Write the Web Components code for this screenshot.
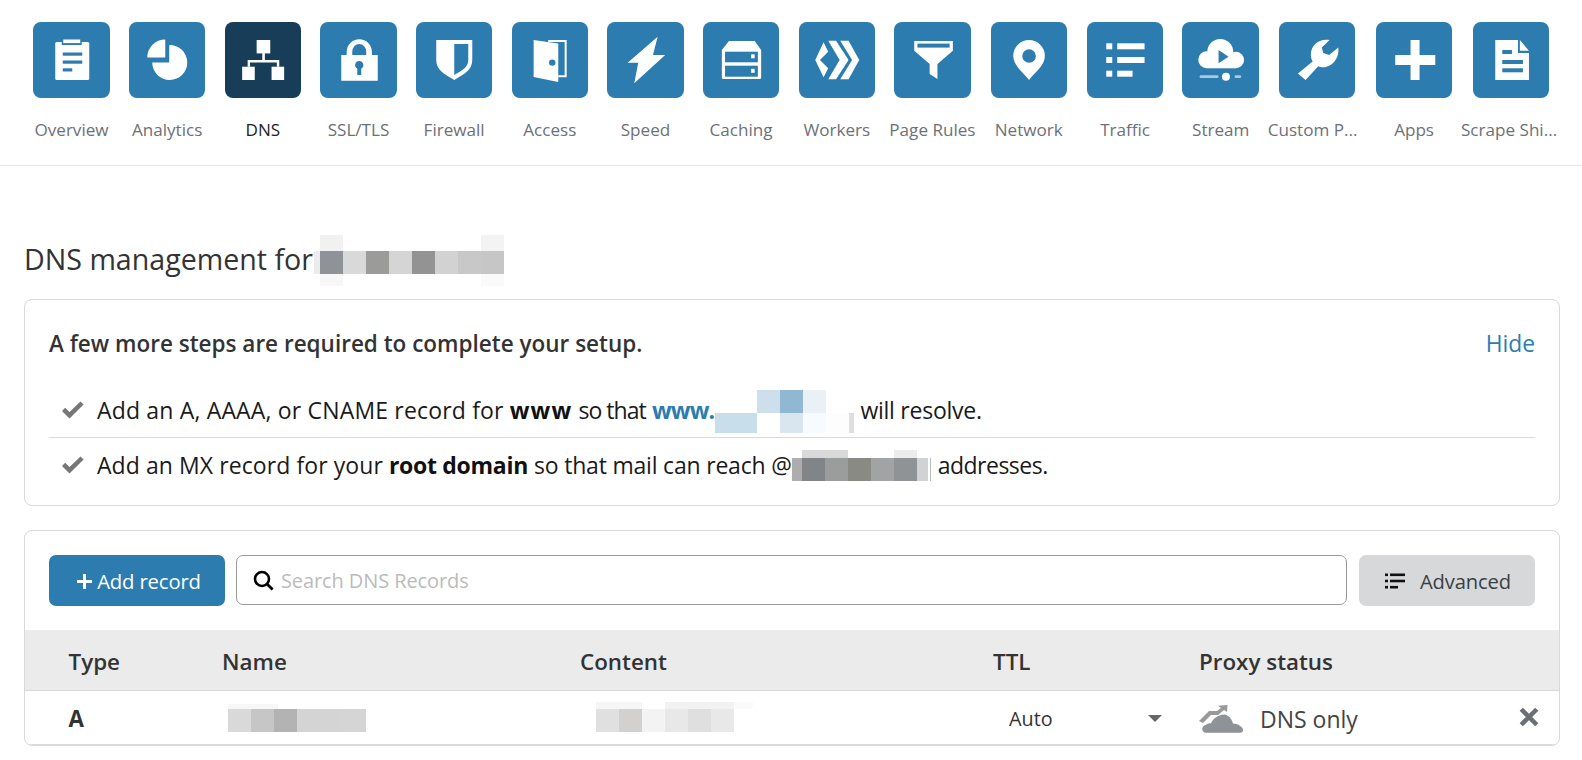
<!DOCTYPE html>
<html lang="en"><head><meta charset="utf-8"><title>DNS</title>
<style>
html,body{margin:0;background:#fff}
body{font-family:"Open Sans","Noto Sans",sans-serif;color:#333;overflow:hidden;height:760px}
svg.g{display:block;width:100%;height:100%}
.b{fill:#2c7cb0}.d{fill:#173d58}
</style></head><body>
<dash-app>
 <app-nav>
  <nav-tab label="Overview"><svg class="g" viewBox="0 0 76 76" fill="#fff"><rect x="22" y="20" width="34" height="38" rx="1.5"/><rect x="28.5" y="17" width="20" height="6" class="b"/><rect x="30" y="17.5" width="17" height="3.6"/><rect x="29.5" y="30.5" width="19.5" height="3.2" class="b"/><rect x="29.5" y="38.5" width="19.5" height="3.2" class="b"/><rect x="29.5" y="46.3" width="9.5" height="3.2" class="b"/></svg></nav-tab>
  <nav-tab label="Analytics"><svg class="g" viewBox="0 0 76 76" fill="#fff"><path d="M36 35.5V17.5A18 18 0 0 0 18 35.5Z"/><path d="M40 23A17.5 17.5 0 1 1 23 40.5H40Z"/></svg></nav-tab>
  <nav-tab label="DNS" active><svg class="g" viewBox="0 0 76 76" fill="#fff"><rect x="31.4" y="18" width="13.6" height="13.4"/><rect x="37" y="31" width="2.6" height="8"/><path d="M22.4 44.7V38H54V44.7H51.6V40.4H24.8V44.7Z"/><rect x="16.9" y="44.7" width="12.6" height="13.3"/><rect x="46.3" y="44.7" width="12.6" height="13.3"/></svg></nav-tab>
  <nav-tab label="SSL/TLS"><svg class="g" viewBox="0 0 76 76" fill="#fff"><path fill-rule="evenodd" d="M21 33H26.4V30A12.6 12.7 0 0 1 51.7 30V33H57.5V58.7H21ZM32 33H46V30A7 8 0 0 0 32 30ZM39 39A4 4 0 0 0 37 46.5V53H41V46.5A4 4 0 0 0 39 39Z"/></svg></nav-tab>
  <nav-tab label="Firewall"><svg class="g" viewBox="0 0 76 76" fill="#fff"><path d="M20 18H56V38C56 48 48 52 38 58C28 52 20 48 20 38Z"/><path d="M38 22H52V38C52 45 46 48.5 38 53Z" class="b"/></svg></nav-tab>
  <nav-tab label="Access"><svg class="g" viewBox="0 0 76 76" fill="#fff"><path d="M21.4 18L46 21.5V60L21.4 55Z"/><path d="M36 19H53.4V54.2H46" fill="none" stroke="#fff" stroke-width="2"/><circle cx="40" cy="40.6" r="3.2" class="b"/></svg></nav-tab>
  <nav-tab label="Speed"><svg class="g" viewBox="0 0 76 76" fill="#fff"><path d="M50.4 14.7L20.4 40.7H31L27 61.3L57.9 33H45.7Z"/></svg></nav-tab>
  <nav-tab label="Caching"><svg class="g" viewBox="0 0 76 76" fill="#fff"><path d="M25.7 19H51.4L57.9 28V55.5Q57.9 57 56.4 57H20.1Q18.6 57 18.6 55.5V28Z"/><rect x="21.8" y="29.7" width="32.8" height="10.6" class="b"/><rect x="21.8" y="43.7" width="32.8" height="11" class="b"/><rect x="47.9" y="32.3" width="3.5" height="4"/><rect x="47.9" y="46.8" width="3.5" height="4"/></svg></nav-tab>
  <nav-tab label="Workers"><svg class="g" viewBox="0 0 76 76" fill="#fff"><path d="M24.3 20.3L29 29.7L20.7 38L29 46.3L24.3 55.3L16 38Z"/><path d="M29 18.7H36.8L49.3 38L36.8 57.3H29L40.4 38Z"/><path d="M41 18.7H49.3L60 38L49.3 57.3H41L52.9 38Z"/></svg></nav-tab>
  <nav-tab label="Page Rules"><svg class="g" viewBox="0 0 76 76" fill="#fff"><path d="M20 19H58.6V28.7L43.2 42V57L35.4 52V42L20 28.7Z"/><rect x="23.2" y="21.6" width="32.2" height="4" class="b"/></svg></nav-tab>
  <nav-tab label="Network" wide><svg class="g" viewBox="0 0 76 76" fill="#fff"><path fill-rule="evenodd" d="M37.8 58C32 50 22 44 22 33.8A15.8 15.8 0 0 1 53.6 33.8C53.6 44 43.6 50 37.8 58ZM37.8 27.2A6.8 6.8 0 1 0 37.8 40.8A6.8 6.8 0 1 0 37.8 27.2Z"/></svg></nav-tab>
  <nav-tab label="Traffic"><svg class="g" viewBox="0 0 76 76" fill="#fff"><rect x="19" y="21.3" width="6" height="6"/><rect x="19" y="35" width="6" height="6"/><rect x="19" y="48.7" width="6" height="6"/><rect x="30" y="21.3" width="27.3" height="6"/><rect x="30" y="35" width="27.3" height="6"/><rect x="30" y="48.7" width="15.3" height="6"/></svg></nav-tab>
  <nav-tab label="Stream"><svg class="g" viewBox="0 0 76 76" fill="#fff"><circle cx="38" cy="30" r="13"/><circle cx="24.5" cy="37.8" r="8.5"/><circle cx="53.5" cy="38" r="8.3"/><rect x="24.5" y="34" width="29" height="12.3"/><path d="M36.3 28V41.3L46.3 34.7Z" class="b"/><rect x="17.3" y="53.3" width="19" height="2.8" rx="1.4" opacity=".6"/><circle cx="43.7" cy="54.7" r="4"/><rect x="52.3" y="53.3" width="6.7" height="2.8" rx="1.4" opacity=".6"/></svg></nav-tab>
  <nav-tab label="Custom P..." wide nudge="9"><svg class="g" viewBox="0 0 76 76" fill="#fff"><path d="M50.3 18L42.5 25.5L44 31L50 33L59 25.5C60.5 36 53 45 44 45.3C42 45.3 40.5 45 39 44.3L26.3 58L18.7 51.5L33.4 39.5C32.2 37.5 31.6 35 31.6 32.5C31.6 23 40 16 50.3 18Z"/></svg></nav-tab>
  <nav-tab label="Apps" wide><svg class="g" viewBox="0 0 76 76" fill="#fff"><rect x="34.3" y="18" width="9" height="40"/><rect x="19" y="33" width="40" height="10"/></svg></nav-tab>
  <nav-tab label="Scrape Shi..." wide nudge="4"><svg class="g" viewBox="0 0 76 76" fill="#fff"><path d="M22 18H44.7V31H55.7V58H22Z"/><path d="M46.6 18L55.7 28.8H46.6Z"/><rect x="29" y="28" width="9.7" height="4" class="b"/><rect x="29" y="38" width="20.7" height="4" class="b"/><rect x="29" y="46.3" width="20.7" height="4" class="b"/></svg></nav-tab>
 </app-nav>
 <dns-title>DNS management for<blur-mask w="190" gap="1" top="-35" rows="16|6:-,23:#f1f1f1,138:-,23:#f3f3f3;23|6:#ececec,23:#8f9296,23:#d9d9d9,23:#9b9b99,23:#d5d5d5,23:#939393,23:#d2d2d2,23:#c8c8c8,23:#c6c6c6;12|6:-,23:#f7f7f7,138:-,23:#fafafa"></blur-mask></dns-title>
 <setup-card>
  <step-row><span style="letter-spacing:.17px">Add an A, AAAA, or CNAME record for</span> <b style="letter-spacing:1.2px">www</b> <span style="letter-spacing:-.95px">so that</span> <a style="letter-spacing:-.8px">www.</a><blur-mask w="139" top="-29" gap="1" rows="23|42:-,23:#cddfea,23:#90b8d2,23:#eaf1f6;20|42:#c8deea,23:-,23:#d9e5ef,23:#f8fbfd,23:#fdfdfd,5:#dedede"></blur-mask> <span style="letter-spacing:-.25px">will resolve.</span></step-row>
  <step-row last>Add an MX record for your <b style="letter-spacing:-.3px">root domain</b> <span style="letter-spacing:-.2px">so that mail can reach @</span><blur-mask w="140" top="-24" rows="8|10:-,46:#d9d9d9,46:-,23:#ececec;23|10:#adadad,23:#828588,23:#9b9c9c,23:#8a8a85,23:#a2a3a5,23:#909396,11:#d0d2d4,2:-,1.5:#bbb"></blur-mask> <span style="letter-spacing:-.5px">addresses.</span></step-row>
 </setup-card>
 <records-card>
  <record-row type="head"></record-row>
  <record-row></record-row>
 </records-card>
</dash-app>
<script>
const def=(n,html,init)=>customElements.define(n,class extends HTMLElement{
  connectedCallback(){ if(this.shadowRoot)return; const s=this.attachShadow({mode:'open'}); s.innerHTML=typeof html==='function'?html(this):html; init&&init(this,s);} });

def('dash-app',`<style>:host{display:block;width:1582px}</style><slot></slot>`);
def('app-nav',`<style>:host{display:flex;height:165px;padding-left:23.7px;border-bottom:1px solid #e6e6e6;box-sizing:content-box}</style><slot></slot>`);
def('nav-tab',t=>`<style>
:host{display:flex;flex-direction:column;align-items:center;width:${t.hasAttribute('wide')?97:95.67}px;flex:none;padding-top:22px;box-sizing:border-box}
.ic{width:76.5px;height:76px;border-radius:8px;background:${t.hasAttribute('active')?'#173d58':'#2c7cb0'};flex:none}
.l{margin-top:20px;font-size:17.1px;line-height:24px;margin-right:${t.getAttribute('nudge')||0}px;color:${t.hasAttribute('active')?'#222':'#6d7177'};white-space:nowrap}
</style><div class="ic"><slot></slot></div><div class="l">${t.getAttribute('label')}</div>`,(t)=>{ if(t.hasAttribute('active')) t.querySelectorAll('.b').forEach(e=>e.setAttribute('class','d')); });
def('blur-mask',t=>{
 const rows=t.getAttribute('rows').split(';').map(r=>{const[h,c]=r.split('|');
  return `<div class="r" style="height:${h}px">`+c.split(',').map(x=>{const[w,col]=x.split(':');return `<i style="width:${w}px;background:${col==='-'?'transparent':col}"></i>`}).join('')+`</div>`}).join('');
 return `<style>:host{display:inline-block;position:relative;width:${t.getAttribute('w')}px;height:0;margin-left:${t.getAttribute('gap')||0}px}
 .m{position:absolute;left:0;top:${t.getAttribute('top')}px}.r{display:flex}.r i{display:block;flex:none}</style><div class="m">${rows}</div>`});
def('dns-title',`<style>:host{display:flex;align-items:center;height:58px;margin:63px 0 12px 24px;font-size:28.6px;color:#333}
span{white-space:nowrap}</style><span><slot></slot></span>`);
def('setup-card',`<style>
:host{display:block;margin:0 22px 0 24px;height:206.5px;box-sizing:border-box;border:1px solid #d9d9d9;border-radius:8px;padding:23px 24px 0}
.h{display:flex;justify-content:space-between;align-items:center;height:40px;margin-bottom:19px;font-size:22.5px;font-weight:600;color:#333}
.h a{font-weight:400;color:#2c7cb0;font-size:22.8px}
</style><div class="h"><span>A few more steps are required to complete your setup.</span><a>Hide</a></div><slot></slot>`);
def('step-row',t=>`<style>
:host{display:flex;align-items:center;height:${t.hasAttribute('last')?54:56}px;box-sizing:border-box;${t.hasAttribute('last')?'':'border-bottom:1px solid #d9d9d9;'}padding-left:12px;font-size:23px;color:#1a1a1a;letter-spacing:.08px}
svg{width:23px;height:18px;flex:none;margin-right:13px}
span{white-space:nowrap}
::slotted(b){font-weight:700;color:#111}
::slotted(a){font-weight:700;color:#2c7cb0}
</style><svg viewBox="0 0 23 18"><path d="M1 10L4.2 6.8L8.5 11L19.5 0.5L22.6 3.6L8.5 17.5Z" fill="#777"/></svg><span><slot></slot></span>`);
def('records-card',`<style>
:host{display:block;margin:24.5px 22px 0 24px;height:215.5px;box-sizing:border-box;border:1px solid #d9d9d9;border-radius:8px;overflow:hidden}
.bar{display:flex;align-items:center;gap:11px;padding:24px 24px 0;height:51px;margin-bottom:24px}
button{font:inherit;border:0;height:51px;border-radius:7px;display:flex;align-items:center;white-space:nowrap;padding:1px 0 0}
.add{background:#2c7cb0;color:#fff;width:176px;box-sizing:border-box;padding-left:4px;justify-content:center;font-size:20.3px;letter-spacing:-.15px;gap:5px}
.add svg{width:15px;height:15px}
.s{flex:1;height:50px;box-sizing:border-box;margin-bottom:1px;border:1px solid #999;border-radius:7px;display:flex;align-items:center;padding:1px 0 0 16px;gap:7px;font-size:20px;color:#bbb;letter-spacing:-.1px}
.s svg{width:21px;height:21px;flex:none}
.adv{background:#d6d8da;color:#3a3f44;width:176px;margin-left:1px;font-size:20.2px;letter-spacing:-.15px;gap:15px;padding-left:26px;box-sizing:border-box}
.adv svg{width:20px;height:16px;flex:none}
</style><div class="bar"><button class="add"><svg viewBox="0 0 15 15"><path d="M6 0h3v6h6v3H9v6H6V9H0V6h6z" fill="#fff"/></svg>Add record</button>
<div class="s"><svg viewBox="0 0 21 21"><circle cx="9" cy="9" r="7" fill="none" stroke="#000" stroke-width="2.6"/><path d="M14 14l5.6 5.6" stroke="#000" stroke-width="2.8"/></svg>Search DNS Records</div>
<button class="adv"><svg viewBox="0 0 20 16"><g fill="#111"><rect y="0.5" width="3" height="2.6"/><rect y="6.7" width="3" height="2.6"/><rect y="12.9" width="3" height="2.6"/><rect x="5" y="0.5" width="15" height="2.6"/><rect x="5" y="6.7" width="15" height="2.6"/><rect x="5" y="12.9" width="8" height="2.6"/></g></svg>Advanced</button></div><slot></slot>`);
def('record-row',t=>{
 const head=t.getAttribute('type')==='head';
 const css=`<style>
 :host{display:grid;grid-template-columns:153.5px 358px 413px 206px 1fr;padding:${head?3:2}px 0 0 43.5px;align-items:center;box-sizing:border-box;height:${head?61:54}px;border-bottom:1px solid #d9d9d9;${head?'background:#ebebeb;':''}font-size:20px;color:#333}
 .b{font-weight:600;font-size:22.4px;color:#333}
 .sel{display:flex;align-items:center;padding-left:16px;padding-right:37px;justify-content:space-between;font-size:19.8px}
 .sel i{border:7px solid transparent;border-top:7px solid #666;border-bottom:0}
 .px{display:flex;align-items:center;padding-right:20px;font-size:23px;color:#444}
 .px svg.c{width:44px;height:28px;margin-right:17px;flex:none}
 .px svg.x{width:20px;height:20px;margin-left:auto;flex:none;margin-top:-4px}
 </style>`;
 if(head) return css+`<div class="b">Type</div><div class="b">Name</div><div class="b">Content</div><div class="b">TTL</div><div class="b">Proxy status</div>`;
 return css+`<div class="b" style="font-weight:700">A</div>
 <div style="height:24px;padding-left:6px"><blur-mask w="138" top="-3" rows="5|50:#f7f7f7;23|23:#d9d9d9,23:#c6c6c6,23:#b3b3b3,23:#d4d4d4,23:#d4d4d4,23:#d5d5d5" style="vertical-align:top"></blur-mask></div>
 <div style="height:24px;padding-left:16px"><blur-mask w="157" top="-5" rows="7|46:#f6f6f6,23:-,69:#f2f2f2,19:#fafafa;23|23:#e0e0e0,23:#d2d1cf,23:#f3f3f3,23:#e8e8e8,23:#dfdfdf,23:#e8e8e8" style="vertical-align:top"></blur-mask></div>
 <div class="sel"><span>Auto</span><i></i></div>
 <div class="px"><svg class="c" viewBox="0 0 44 28"><path d="M0 16L10 6H18L22 3L19 .7L28.5 0L28 7L25 5L19 10H12L4 18Z" fill="#999"/><path d="M7 27.7C2 27.7 2 20.5 7 20C8 19 10 18 12 18.5C14 13 20 9.5 25 9.5C29 9.5 33 14 34 18.5C39 18.5 44 22 44 25C44 27 43 27.7 41 27.7Z" fill="#8f9296"/></svg>DNS only<svg class="x" viewBox="0 0 18 18"><path d="M2 2L16 16M16 2L2 16" stroke="#6b6f73" stroke-width="4"/></svg></div>`;
});
</script>
</body></html>
